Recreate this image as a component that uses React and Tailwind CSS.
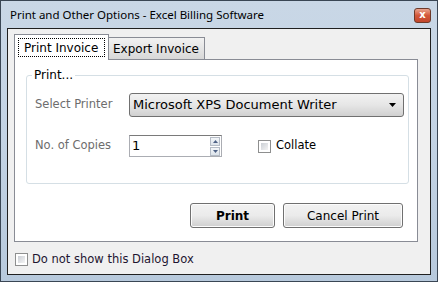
import React from 'react'

const ui = { fontFamily: '"DejaVu Sans", Verdana, sans-serif' }
const titleFont = { fontFamily: '"Noto Sans", "Open Sans", sans-serif' }

function CheckBox() {
  return (
    <span className="box-border block h-[13px] w-[13px] shrink-0 border border-[#8e8f8f] bg-white p-[2px]">
      <span className="block h-full w-full bg-gradient-to-br from-[#cbcfd5] to-[#f4f4f4]" />
    </span>
  )
}

function WinButton({ children, bold, width }) {
  return (
    <button
      className={`${width} h-[25px] rounded-[3px] border border-[#707070] bg-gradient-to-b from-[#f2f2f2] via-[#ebebeb] to-[#cfcfcf] text-[12px] text-black shadow-[inset_0_0_0_1px_#fcfcfc] ${bold ? 'font-bold' : ''}`}
      style={ui}
    >
      {children}
    </button>
  )
}

export default function App() {
  return (
    <div className="box-border flex h-[282px] w-[438px] flex-col border border-[#3a4654] bg-gradient-to-b from-[#c9d7e6] via-[#c3d3e4] to-[#b7c9dc] px-[6px] pb-[6px]">
      <div className="flex h-[27px] shrink-0 items-center justify-between pl-[3px]">
        <span className="text-[11.5px] text-black" style={titleFont}>
          Print and Other Options - Excel Billing Software
        </span>
        <span className="mt-[1px] flex h-[15px] w-[17px] items-center justify-center rounded-[3px] border border-[#6e3a2a] bg-gradient-to-b from-[#e9a48e] via-[#d3573a] to-[#c2472c] text-[10px] font-bold leading-none text-white" style={ui}>
          x
        </span>
      </div>

      <div className="flex flex-1 flex-col border border-[#202020] bg-[#f0f0f0] pl-[6px] pr-[10px] pt-[5px]" style={ui}>
        <div className="flex h-[25px] items-end">
          <div className="relative z-10 -mb-px flex h-[26px] w-[95px] items-start border border-b-0 border-[#898c95] bg-white px-[3px] pt-[3px]">
            <span className="flex h-[19px] w-full items-center border border-dotted border-black pl-[5px] text-[12px] text-black">
              Print Invoice
            </span>
          </div>
          <div className="flex h-[22px] w-[96px] items-center border border-b-0 border-l-0 border-[#898c95] bg-gradient-to-b from-[#f2f2f2] to-[#d8d8d8] pl-[4px] text-[12px] text-black">
            Export Invoice
          </div>
        </div>

        <div className="box-border h-[183px] w-[404px] border border-[#898c95] bg-white">
          <div className="relative ml-[11px] mt-[15px] box-border h-[109px] w-[383px] rounded-[3px] border border-[#d5dfe5] pl-[8px] pt-[17px]">
            <span className="absolute -top-[8px] left-[5px] bg-white px-[2px] text-[12px] leading-[14px] text-black">
              Print...
            </span>
            <div className="flex h-[24px] items-center">
              <span className="w-[94px] text-[11.5px] text-[#6d6d6d]">Select Printer</span>
              <div className="flex h-[24px] w-[275px] items-center justify-between rounded-[3px] border border-[#707070] bg-gradient-to-b from-[#f2f2f2] via-[#e6e6e6] to-[#d0d0d0] pl-[3px] pr-[7px] text-[13px] text-black">
                <span>Microsoft XPS Document Writer</span>
                <svg width="7" height="4" viewBox="0 0 7 4">
                  <path d="M0 0h7L3.5 4z" fill="#000" />
                </svg>
              </div>
            </div>
            <div className="mt-[18px] flex h-[22px] items-center">
              <span className="w-[94px] text-[11.5px] text-[#6d6d6d]">No. of Copies</span>
              <div className="flex h-[22px] w-[93px] items-center justify-between border border-[#abadb3] border-t-[#7a7a7a] bg-white pl-[2px] pr-[1px] text-[13px] text-black">
                <span>1</span>
                <div className="flex flex-col gap-[1px]">
                  <span className="flex h-[9px] w-[10px] items-center justify-center border border-[#b5bcc6] bg-gradient-to-b from-[#f3f6f9] to-[#dce3ea]">
                    <svg width="5" height="3" viewBox="0 0 5 3"><path d="M2.5 0L5 3H0z" fill="#4d6185" /></svg>
                  </span>
                  <span className="flex h-[9px] w-[10px] items-center justify-center border border-[#b5bcc6] bg-gradient-to-b from-[#f3f6f9] to-[#dce3ea]">
                    <svg width="5" height="3" viewBox="0 0 5 3"><path d="M0 0h5L2.5 3z" fill="#4d6185" /></svg>
                  </span>
                </div>
              </div>
              <div className="ml-[36px] flex items-center gap-[5px]">
                <CheckBox />
                <span className="text-[11.5px] text-black">Collate</span>
              </div>
            </div>
          </div>

          <div className="mr-[14px] mt-[19px] flex justify-end gap-[8px]">
            <WinButton bold width="w-[85px]">Print</WinButton>
            <WinButton width="w-[120px]">Cancel Print</WinButton>
          </div>
        </div>

        <div className="-ml-[6px] mt-[9px] flex items-center gap-[4px] pl-[7px]">
          <CheckBox />
          <span className="text-[11.5px] text-[#1e1530]">Do not show this Dialog Box</span>
        </div>
      </div>
    </div>
  )
}
